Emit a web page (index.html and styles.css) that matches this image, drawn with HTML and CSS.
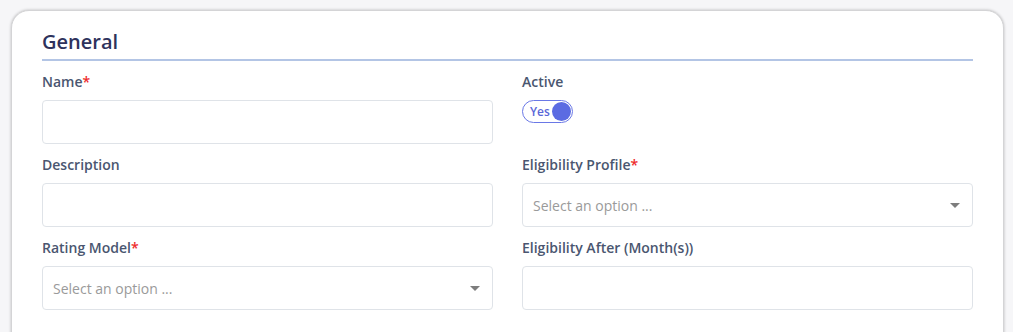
FILE: index.html
```html
<!DOCTYPE html>
<html lang="en">
<head>
    <meta charset="utf-8" />
    <title>General</title>
    <link rel="stylesheet" href="styles.css">
</head>
<body>
    <div class="card">
        <h2 class="cardTitle">General</h2>
        <div class="formGrid">
            <div class="field">
                <label>Name<span class="req">*</span></label>
                <input type="text" class="textInput">
            </div>
            <div class="field">
                <label>Active</label>
                <div class="toggle">
                    <span class="toggleText">Yes</span>
                    <span class="toggleKnob"></span>
                </div>
            </div>
            <div class="field">
                <label>Description</label>
                <input type="text" class="textInput">
            </div>
            <div class="field">
                <label>Eligibility Profile<span class="req">*</span></label>
                <div class="selectBox">
                    <span class="placeholder">Select an option ...</span>
                    <span class="caret"></span>
                </div>
            </div>
            <div class="field">
                <label>Rating Model<span class="req">*</span></label>
                <div class="selectBox">
                    <span class="placeholder">Select an option ...</span>
                    <span class="caret"></span>
                </div>
            </div>
            <div class="field">
                <label>Eligibility After (Month(s))</label>
                <input type="text" class="textInput">
            </div>
        </div>
    </div>
</body>
</html>
```

FILE: styles.css
```css
body {
    margin: 0;
    background: #f6f6f8;
    font-family: "Open Sans", "Noto Sans", sans-serif;
}

.card {
    box-sizing: border-box;
    width: 993px;
    margin: 10px 0 0 11px;
    padding: 17px 30px 30px 30px;
    background: #fff;
    border-radius: 18px 18px 0 0;
    border: 1px solid #d4d4d6;
    box-shadow: 0 0 3px rgba(0, 0, 0, 0.25);
}

.cardTitle {
    margin: 0 0 11px 0;
    padding-bottom: 4px;
    font-size: 20px;
    line-height: 27px;
    font-weight: 600;
    color: #2e325c;
    border-bottom: 2px solid #b3c5e5;
}

.formGrid {
    display: grid;
    grid-template-columns: 1fr 1fr;
    column-gap: 29px;
    row-gap: 11px;
}

.field label {
    display: block;
    font-size: 14px;
    line-height: 20px;
    font-weight: 600;
    color: #4a5670;
    margin-bottom: 8px;
}

.req {
    color: #ee2b2b;
}

.textInput,
.selectBox {
    box-sizing: border-box;
    display: block;
    width: 100%;
    height: 44px;
    border: 1px solid #dfe3e8;
    border-radius: 4px;
    background: #fff;
    font-family: inherit;
    font-size: 14px;
    margin: 0;
}

.selectBox {
    display: flex;
    align-items: center;
    justify-content: space-between;
    padding: 0 12px 0 10px;
}

.placeholder {
    color: #9a9a9a;
    font-size: 14px;
}

.caret {
    width: 0;
    height: 0;
    border-left: 5px solid transparent;
    border-right: 5px solid transparent;
    border-top: 5px solid #7d7d7d;
}

.toggle {
    box-sizing: border-box;
    display: flex;
    align-items: center;
    justify-content: space-between;
    width: 51px;
    height: 23px;
    padding: 0 1px 0 7px;
    border: 1px solid #6a78e6;
    border-radius: 12px;
}

.toggleText {
    font-size: 12px;
    font-weight: 600;
    color: #5a67d8;
}

.toggleKnob {
    width: 19px;
    height: 19px;
    border-radius: 50%;
    background: #5b6be2;
}
```
